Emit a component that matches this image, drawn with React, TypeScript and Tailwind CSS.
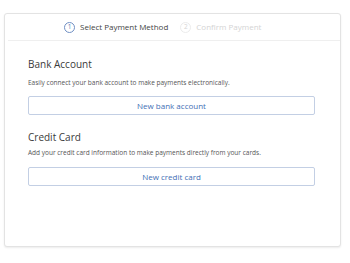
export default function App() {
  return (
    <div className="w-[350px] h-[263px] bg-white pt-[13px] pl-[4px] font-['Open_Sans',sans-serif]">
      <div className="w-[337px] h-[234px] rounded-[3px] border border-[#e3e3e3] shadow-[0_1px_2px_rgba(0,0,0,0.08)] bg-white">
        {/* Steps */}
        <div className="h-[27px] ml-[3px] border-b border-[#efefef] flex items-center pl-[56px] gap-[12px] text-[8px]">
          <div className="flex items-center gap-[5px] text-[#444]">
            <span className="w-[11px] h-[11px] rounded-full border border-[#6f8fc4] flex items-center justify-center text-[6.5px] text-[#5b7cb5] leading-none">
              1
            </span>
            <span>Select Payment Method</span>
          </div>
          <div className="flex items-center gap-[5px] text-[#d4d4d4]">
            <span className="w-[11px] h-[11px] rounded-full border border-[#ececec] flex items-center justify-center text-[6.5px] leading-none">
              2
            </span>
            <span>Confirm Payment</span>
          </div>
        </div>

        <div className="pl-[23px] pr-[25px]">
          {/* Bank */}
          <h2 className="mt-[16px] text-[10px] leading-[14px] text-[#3a3a3a]">Bank Account</h2>
          <p className="mt-[7px] text-[6.5px] leading-[10px] text-[#555]">
            Easily connect your bank account to make payments electronically.
          </p>
          <button className="mt-[8px] w-full h-[19px] rounded-[2px] border border-[#c3cfe4] text-[8px] text-[#3f6fb5]">
            New bank account
          </button>

          {/* Credit card */}
          <h2 className="mt-[15px] text-[10px] leading-[14px] text-[#3a3a3a]">Credit Card</h2>
          <p className="mt-[4px] text-[6.5px] leading-[10px] text-[#555]">
            Add your credit card information to make payments directly from your cards.
          </p>
          <button className="mt-[9px] w-full h-[19px] rounded-[2px] border border-[#c3cfe4] text-[8px] text-[#3f6fb5]">
            New credit card
          </button>
        </div>
      </div>
    </div>
  );
}
